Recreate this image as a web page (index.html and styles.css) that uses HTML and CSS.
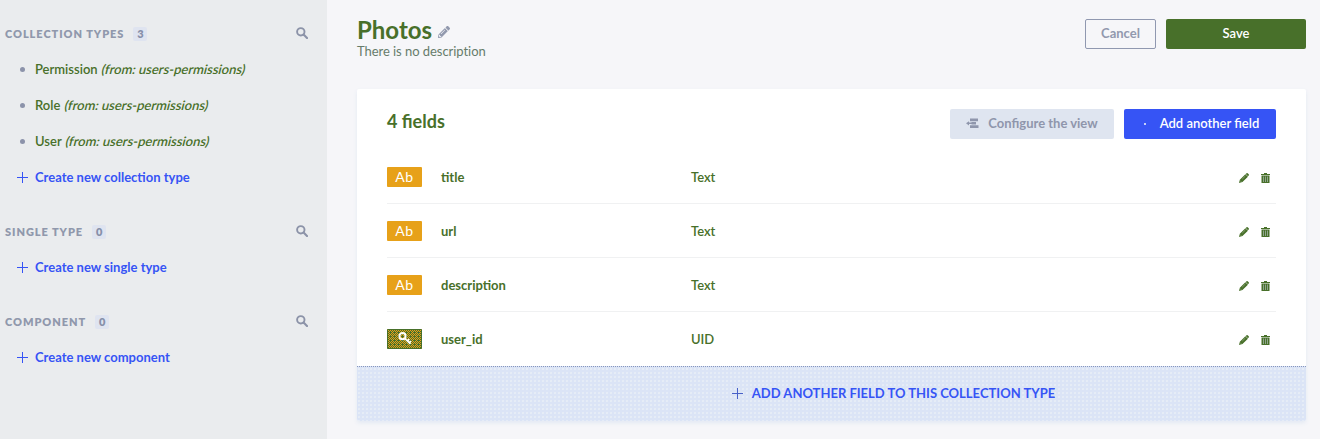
FILE: index.html
```html
<!DOCTYPE html>
<html lang="en">
<head>
<meta charset="utf-8">
<title>Photos</title>
<link rel="stylesheet" href="styles.css">
</head>
<body>
<svg width="0" height="0" class="defs">
  <symbol id="search" viewBox="0 0 12 12"><circle cx="4.8" cy="4.8" r="3.7" fill="none" stroke="currentColor" stroke-width="1.9"/><path d="M7.6 7.6L11 11" stroke="currentColor" stroke-width="2.1" stroke-linecap="round"/></symbol>
  <symbol id="plus" viewBox="0 0 11 11"><path d="M5.5 0v11M0 5.5h11" stroke="currentColor" stroke-width="1"/></symbol>
  <symbol id="pencil" viewBox="0 0 512 512"><path fill="currentColor" d="M498 142l-46 46c-5 5-13 5-17 0L324 77c-5-5-5-12 0-17l46-46c19-19 49-19 68 0l60 60c19 19 19 49 0 68zM284 100L22 362 0 484c-3 16 12 30 28 28l122-22 262-262c5-5 5-13 0-17L301 100c-4-5-12-5-17 0zM124 340c-5-6-5-14 0-20l154-154c6-5 14-5 20 0s5 14 0 20L144 340c-6 5-14 5-20 0zm-36 84h48v36l-64 12-32-32 12-65h36v49z"/></symbol>
  <symbol id="pencil-solid" viewBox="0 0 11 11"><path fill="currentColor" d="M7.400 1.200L8.300.3q.6-.5 1.200 0l1.200 1.200q.5.600 0 1.200l-.9.900zM7 1.400l2.800 2.800L3.800 10 0 11l.9-3.700z"/><path d="M1.300 8.300l1.300 1.400M3.500 6.800L7 3.300" stroke="#fff" stroke-opacity=".5" stroke-width=".7"/></symbol>
  <symbol id="trash" viewBox="0 0 9 10"><path fill="currentColor" d="M0 1h3V0h3v1h3v1H0zM.5 2.500h8V10h-8z"/><path d="M2.500 3.500v5.500M4.500 3.500v5.500M6.500 3.500v5.500" stroke="#a3b2aa" stroke-width=".8"/></symbol>
</svg>
<div class="app">
  <nav class="sidebar">
    <section class="group">
      <h3 class="group-title">COLLECTION TYPES <span class="count">3</span><svg class="search"><use href="#search"/></svg></h3>
      <a class="item"><i class="bullet"></i><span>Permission <em>(from: users-permissions)</em></span></a>
      <a class="item"><i class="bullet"></i><span>Role <em>(from: users-permissions)</em></span></a>
      <a class="item"><i class="bullet"></i><span>User <em>(from: users-permissions)</em></span></a>
      <a class="item create"><svg class="plus"><use href="#plus"/></svg><span>Create new collection type</span></a>
    </section>
    <section class="group">
      <h3 class="group-title">SINGLE TYPE <span class="count">0</span><svg class="search"><use href="#search"/></svg></h3>
      <a class="item create"><svg class="plus"><use href="#plus"/></svg><span>Create new single type</span></a>
    </section>
    <section class="group">
      <h3 class="group-title">COMPONENT <span class="count">0</span><svg class="search"><use href="#search"/></svg></h3>
      <a class="item create"><svg class="plus"><use href="#plus"/></svg><span>Create new component</span></a>
    </section>
  </nav>
  <main class="main">
    <header class="header">
      <div>
        <h1 class="title">Photos <svg class="title-edit"><use href="#pencil"/></svg></h1>
        <p class="subtitle">There is no description</p>
      </div>
      <div class="actions">
        <button class="btn cancel">Cancel</button>
        <button class="btn save">Save</button>
      </div>
    </header>
    <section class="card">
      <div class="card-head">
        <h2 class="card-title">4 fields</h2>
        <div class="actions">
          <button class="btn configure"><svg class="layout-icon" viewBox="0 0 13 11"><path fill="currentColor" d="M4 .5h8v2.700H4zM5.500 4h4.500v2.500H5.500zM4 7.300h8.500V10H4zM0 5.200l3-2v1.200h3v1.700H3v1.300z"/></svg>Configure the view</button>
          <button class="btn add"><i class="dot"></i>Add another field</button>
        </div>
      </div>
      <div class="rows">
        <div class="row"><span class="badge">Ab</span><span class="name">title</span><span class="type">Text</span><svg class="edit"><use href="#pencil-solid"/></svg><svg class="trash"><use href="#trash"/></svg></div>
        <div class="row"><span class="badge">Ab</span><span class="name">url</span><span class="type">Text</span><svg class="edit"><use href="#pencil-solid"/></svg><svg class="trash"><use href="#trash"/></svg></div>
        <div class="row"><span class="badge">Ab</span><span class="name">description</span><span class="type">Text</span><svg class="edit"><use href="#pencil-solid"/></svg><svg class="trash"><use href="#trash"/></svg></div>
        <div class="row"><span class="badge uid"><svg width="35" height="20" viewBox="0 0 35 20"><defs><pattern id="weave" width="4" height="4" patternUnits="userSpaceOnUse"><path fill="#e7a119" shape-rendering="crispEdges" d="M0 0h1v1H0zM2 0h1v1H2zM1 1h1v1H1zM3 1h1v1H3zM0 2h1v1H0zM2 2h1v1H2zM1 3h1v1H1z"/></pattern></defs><path fill="#48702a" d="M0 0h35v20H0z"/><path fill="url(#weave)" d="M1 1h33v18H1z"/><g fill="none" stroke="#fff" transform="translate(11 3)"><circle cx="4.500" cy="4.200" r="3.100" stroke-width="2"/><path d="M6.800 6.500l5.700 5.300M9 9.400l2.200-2.200M10.700 11.300l2.300-2.300" stroke-width="1.700"/></g></svg></span><span class="name">user_id</span><span class="type">UID</span><svg class="edit"><use href="#pencil-solid"/></svg><svg class="trash"><use href="#trash"/></svg></div>
      </div>
      <button class="card-foot"><svg class="foot-plus"><use href="#plus"/></svg>ADD ANOTHER FIELD TO THIS COLLECTION TYPE</button>
    </section>
  </main>
</div>
</body>
</html>
```
FILE: styles.css
```css
* { box-sizing: border-box; }
body { margin: 0; font-family: Lato, "Open Sans", sans-serif; font-size: 13px; color: #48702a; background: #f6f6f9; }
h1, h2, h3, p { margin: 0; }
button { font: inherit; border: 0; padding: 0; }
svg { flex: none; }
.defs { position: absolute; }
.app { display: flex; height: 439px; overflow: hidden; }

.sidebar { width: 327px; background: #eaecee; padding-top: 16px; flex: none; }
.group { margin-bottom: 18px; }
.group-title { display: flex; align-items: center; height: 36px; padding: 0 19px 1px 5px; font-size: 11px; font-weight: 800; letter-spacing: .95px; color: #9098ac; }
.count { display: flex; align-items: center; justify-content: center; width: 14px; height: 14px; margin-left: 9px; border-radius: 2px; background: #dfe4f0; font-size: 11px; letter-spacing: 0; color: #8790aa; }
.search { width: 12px; height: 12px; margin: -2px 0 0 auto; color: #8c93a8; }
.item { display: flex; align-items: center; height: 36px; padding: 0 0 2px 17px; font-weight: 600; }
.item em { display: inline-block; margin-left: 1px; font-style: normal; transform: skewX(-14deg); }
.bullet { width: 5px; height: 5px; margin: 1px 10px 0 3px; border-radius: 50%; background: #8c93aa; }
.create { color: #3654f5; font-weight: 700; }
.plus { width: 11px; height: 11px; margin: 0 7px 0 0; }

.main { flex: 1; padding: 19px 14px 0 30px; }
.header { display: flex; justify-content: space-between; align-items: flex-start; height: 70px; }
.title { display: flex; align-items: center; height: 22px; font-size: 24px; font-weight: 700; line-height: 22px; }
.title-edit { width: 12px; height: 12px; margin: 4px 0 0 6px; color: #9299ae; }
.subtitle { font-size: 13px; line-height: 20px; letter-spacing: -.05px; color: #667c6b; }
.actions { display: flex; gap: 10px; }
.btn { height: 30px; padding-bottom: 1px; border-radius: 2px; font-weight: 600; display: flex; align-items: center; justify-content: center; }
.cancel { width: 71px; border: 1px solid #9098b0; padding-bottom: 2px; color: #9299ae; background: transparent; font-weight: 700; }
.save { width: 140px; padding-bottom: 2px; background: #48702a; color: #fff; }
.card { height: 332px; background: #fff; border-radius: 2px; box-shadow: 0 2px 4px #e3e9f3; }
.card-head { display: flex; justify-content: space-between; height: 61px; padding: 20px 30px 0; }
.card-title { font-size: 18px; font-weight: 700; line-height: 25px; }
.configure { width: 164px; padding-bottom: 2px; background: #dfe5f0; color: #8f96ac; font-weight: 700; }
.layout-icon { width: 13px; height: 11px; margin: 1px 9px 0 0; }
.add { width: 152px; padding: 0 0 2px 3px; background: #3654f5; color: #fff; }
.dot { width: 2px; height: 2px; margin: 2px 14px 0 0; background: #c6d0f9; }
.rows { padding: 0 30px; }
.row { display: flex; align-items: center; height: 54px; font-weight: 600; border-bottom: 1px solid #f0f1f2; }
.row:last-child { padding-bottom: 1px; border-bottom: 0; }
.badge { display: flex; align-items: center; justify-content: center; width: 35px; height: 20px; margin-right: 19px; border-radius: 1px; background: #e7a119; color: #fff; font-size: 14px; letter-spacing: .5px; font-weight: 400; }
.uid { overflow: hidden; }
.name { width: 250px; font-weight: 700; }
.edit { width: 10px; height: 10px; margin: 2px 12px 0 0; }
.type { flex: 1; }
.trash { width: 9px; height: 10px; margin: 2px 6px 0 0; }
.card-foot { display: flex; align-items: center; justify-content: center; width: 100%; height: 55px; padding: 0 0 2px 124px; color: #3654f5; font-weight: 700; border-top: 1px dotted #8796bd; border-radius: 0 0 2px 2px; background: radial-gradient(circle, #e7edf7 .7px, transparent .8px) 0 0 / 4px 4px, #dbe4f6; }
.foot-plus { width: 11px; height: 11px; margin: 1px 9px 0 0; color: #4861c8; }
```
